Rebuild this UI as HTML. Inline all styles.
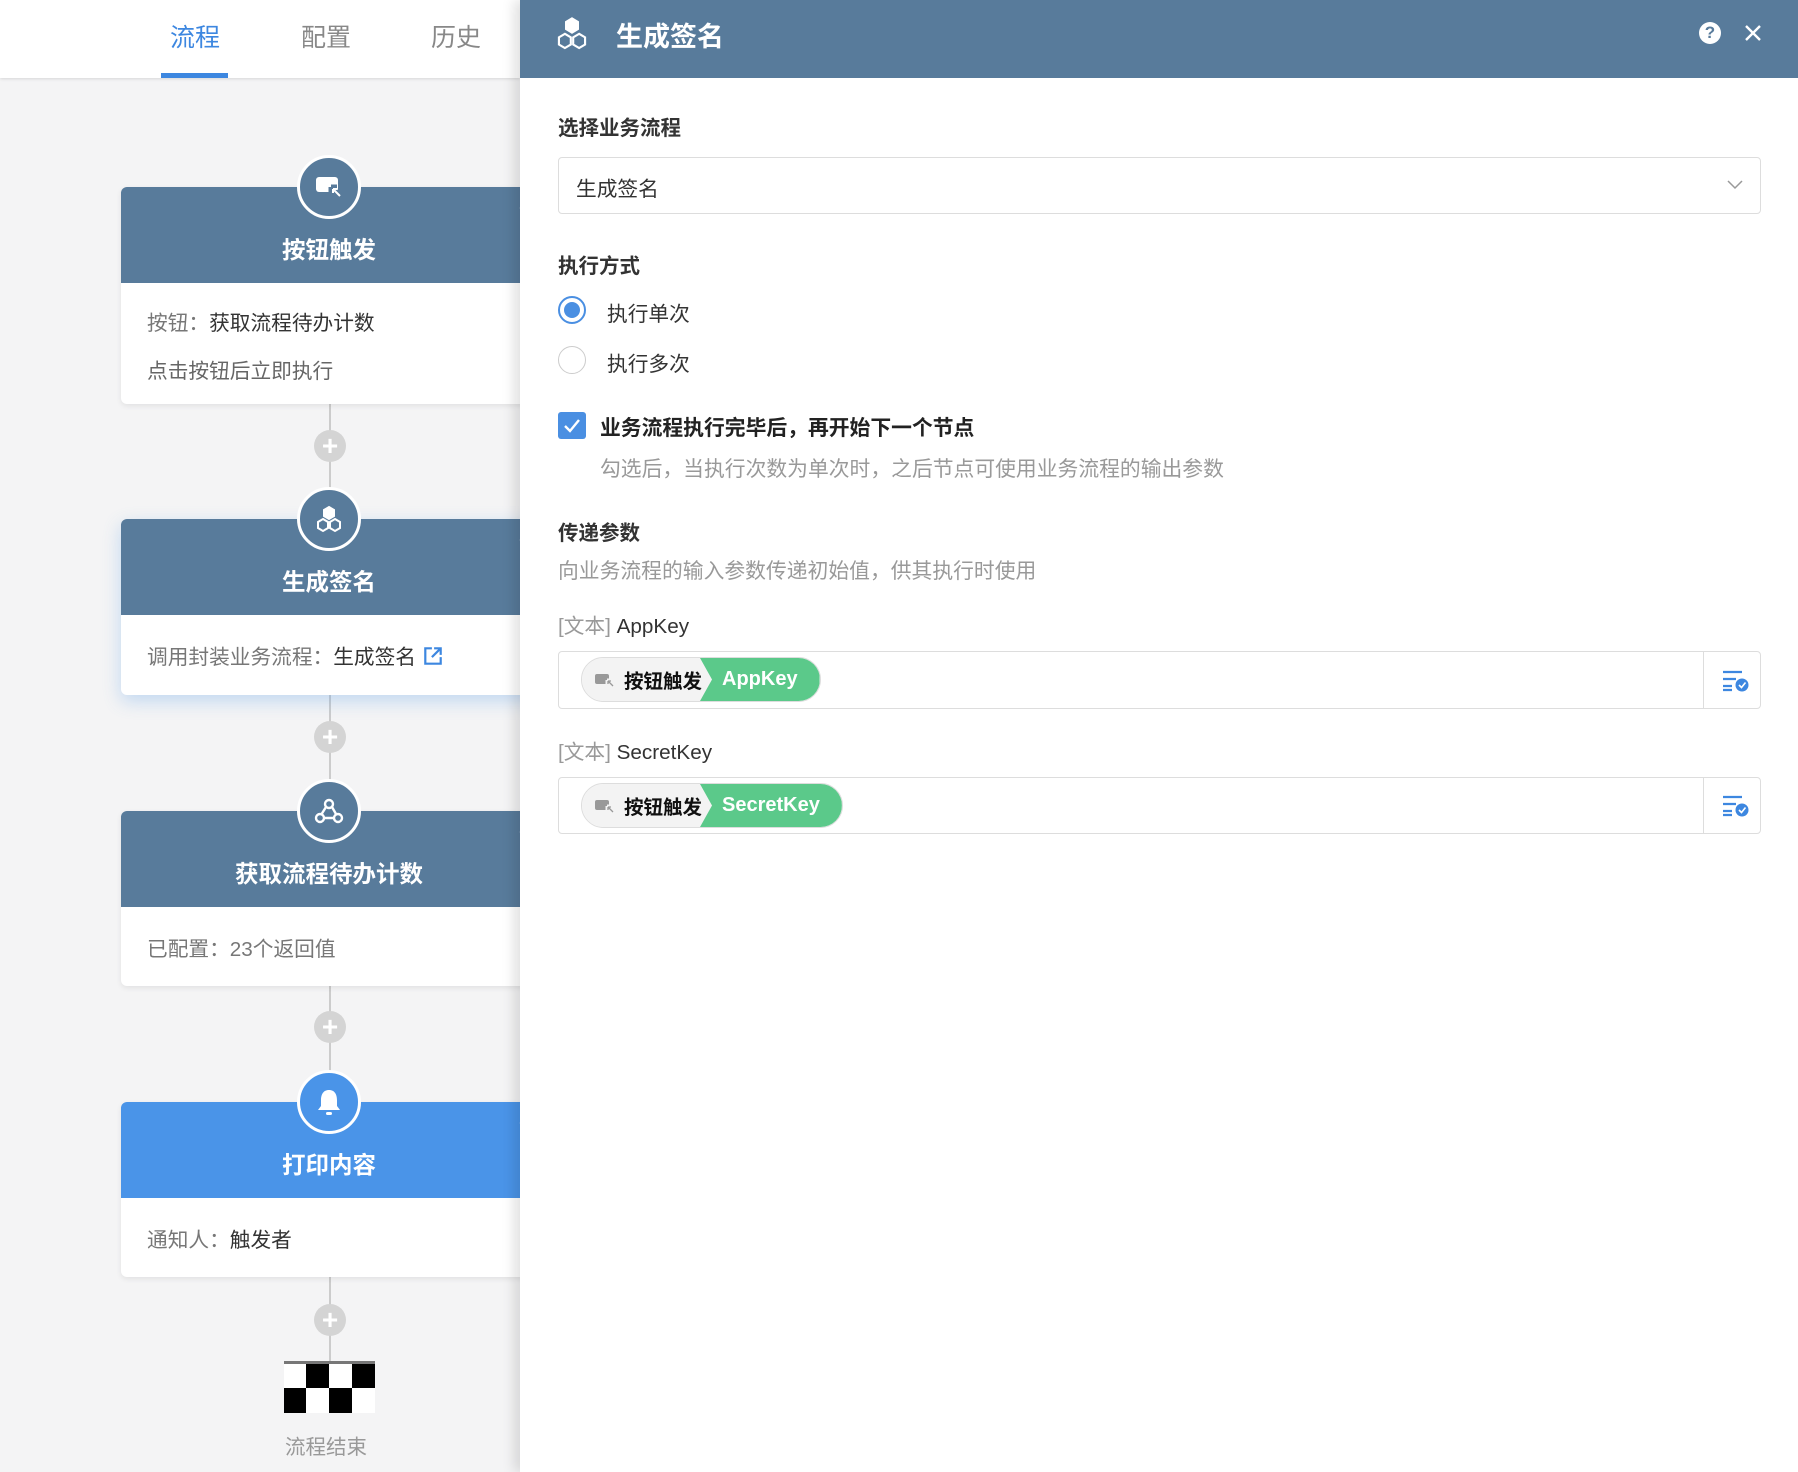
<!DOCTYPE html>
<html><head><meta charset="utf-8"><style>
*{margin:0;padding:0;box-sizing:border-box}
body{width:1798px;height:1472px;position:relative;overflow:hidden;background:#f4f4f5;font-family:"Liberation Sans","Noto Sans CJK SC",sans-serif}
.abs{position:absolute}
.topbar{left:0;top:0;width:520px;height:78px;background:#fff;box-shadow:0 1px 3px rgba(0,0,0,.12)}
.tab{top:18px;font-size:25px;color:#888;width:80px;text-align:center}
.card{left:121px;width:420px;background:#fff;border-radius:6px 0 0 6px;box-shadow:0 2px 6px rgba(0,0,0,.08);overflow:visible}
.ch{position:absolute;left:0;top:0;width:100%;height:96px;background:#587b9b;border-radius:6px 0 0 0;color:#fff;font-size:23.5px;font-weight:bold;text-align:center;padding-top:28px;line-height:70px}
.ch span{position:relative;left:-2px}
.ic{position:absolute;left:176px;top:-32px;width:64px;height:64px;border-radius:50%;background:#587b9b;border:3px solid #fff;display:flex;align-items:center;justify-content:center}
.dots{position:absolute;right:0;top:16px;color:#dfe6ee;font-size:18px;letter-spacing:1px;line-height:10px}
.cb{position:absolute;left:26px;font-size:20.7px;color:#333}
.cb .g{color:#777}
.line{left:329px;width:2px;background:#ccc}
.plus{left:314px;width:32px;height:32px;border-radius:50%;background:#d4d4d4;color:#fff;font-size:28px;line-height:31px;text-align:center;font-weight:bold}
.panel{left:520px;top:0;width:1278px;height:1472px;background:#fff;box-shadow:-6px 0 12px rgba(0,0,0,.12)}
.ph{left:0;top:0;width:1278px;height:78px;background:#587b9b}
.lbl{left:38px;font-size:20.5px;font-weight:bold;color:#333}
.txt{font-size:20.7px;color:#333}
.box{left:38px;width:1203px;border:1px solid #ddd;border-radius:4px;background:#fff}
.pill{position:absolute;left:22px;top:5px;height:45px;display:flex;border-radius:23px;overflow:hidden;border:1px solid #ddd}
.pg{background:#f3f3f3;display:flex;align-items:center;padding-left:12px;padding-right:10px;font-size:19.5px;font-weight:bold;color:#111}
.pgr{background:#5bc98a;color:#fff;font-size:20px;font-weight:bold;display:flex;align-items:center;padding:0 22px 0 22px;margin-left:-12px;clip-path:polygon(0 0,100% 0,100% 100%,0 100%,12px 50%)}
</style></head><body>
<div class="abs topbar"></div>
<div class="abs tab" style="left:155px;color:#3d87e0">流程</div>
<div class="abs tab" style="left:286px">配置</div>
<div class="abs tab" style="left:416px">历史</div>
<div class="abs" style="left:161px;top:73px;width:67px;height:5px;background:#3d87e0"></div>

<div class="abs line" style="top:400px;height:1000px"></div>

<div class="abs card" style="top:187px;height:217px">
 <div class="ch"><span>按钮触发</span></div>
 <div class="ic"><svg width="30" height="26" viewBox="0 0 30 26"><rect x="2" y="3" width="22" height="15" rx="3" fill="#fff"/><path d="M17 13 L27 23 M17 13 L17 19 M17 13 L23 13" stroke="#587b9b" stroke-width="5"/><path d="M19 15 L26 22 M19 15 V19 M19 15 H23" stroke="#fff" stroke-width="2" fill="none"/></svg></div>
 <div class="dots">•••</div>
 <div class="cb" style="top:119px"><span class="g">按钮：</span>获取流程待办计数</div>
 <div class="cb g" style="top:167px;color:#666">点击按钮后立即执行</div>
</div>
<div class="abs plus" style="top:430px">+</div>

<div class="abs card" style="top:519px;height:176px;box-shadow:0 6px 18px rgba(74,148,232,.3)">
 <div class="ch"><span>生成签名</span></div>
 <div class="ic"><svg width="30" height="30" viewBox="0 0 30 30" fill="none" stroke="#fff" stroke-width="2"><path d="M15 3 L20 6 V12 L15 15 L10 12 V6Z" fill="#fff"/><path d="M9 15 L14 18 V24 L9 27 L4 24 V18Z"/><path d="M21 15 L26 18 V24 L21 27 L16 24 V18Z"/></svg></div>
 <div class="dots">•••</div>
 <div class="cb" style="top:121px"><span class="g">调用封装业务流程：</span>生成签名 <svg width="22" height="22" viewBox="0 0 20 20" fill="none" stroke="#3d87e0" stroke-width="2" style="vertical-align:-3px"><path d="M9 3 H3 V17 H17 V11 M11 3 H17 V9 M17 3 L9 11"/></svg></div>
</div>
<div class="abs plus" style="top:721px">+</div>

<div class="abs card" style="top:811px;height:175px">
 <div class="ch"><span>获取流程待办计数</span></div>
 <div class="ic"><svg width="32" height="30" viewBox="0 0 32 30" fill="none" stroke="#fff" stroke-width="2.4"><circle cx="16" cy="8" r="4"/><circle cx="7" cy="22" r="4"/><circle cx="25" cy="22" r="4"/><path d="M13 11 L8 19 M19 11 L23 18 M11 22 H21"/></svg></div>
 <div class="dots">•••</div>
 <div class="cb" style="top:121px"><span class="g">已配置：23个返回值</span></div>
</div>
<div class="abs plus" style="top:1011px">+</div>

<div class="abs card" style="top:1102px;height:175px">
 <div class="ch" style="background:#4a94e8"><span>打印内容</span></div>
 <div class="ic" style="background:#4a94e8"><svg width="28" height="30" viewBox="0 0 28 30"><path d="M14 3 C8 3 6 8 6 13 V19 L3 23 H25 L22 19 V13 C22 8 20 3 14 3Z" fill="#fff"/><rect x="11" y="25" width="6" height="3" rx="1.5" fill="#fff"/></svg></div>
 <div class="dots">•••</div>
 <div class="cb" style="top:121px"><span class="g">通知人：</span>触发者</div>
</div>
<div class="abs plus" style="top:1304px">+</div>

<div class="abs" style="left:284px;top:1361px;width:91px;height:52px;background:#fff;border-top:3px solid #777">
 <div class="abs" style="left:22px;top:0;width:23px;height:24px;background:#000"></div>
 <div class="abs" style="left:68px;top:0;width:23px;height:24px;background:#000"></div>
 <div class="abs" style="left:0;top:24px;width:22px;height:25px;background:#000"></div>
 <div class="abs" style="left:45px;top:24px;width:23px;height:25px;background:#000"></div>
</div>
<div class="abs" style="left:285px;top:1430px;font-size:20.5px;color:#999">流程结束</div>

<div class="abs panel">
 <div class="abs ph"></div>
 <svg class="abs" style="left:34px;top:16px" width="36" height="38" viewBox="0 0 30 32" fill="none" stroke="#fff" stroke-width="1.8"><path d="M15 2 L20 5 V11 L15 14 L10 11 V5Z" fill="#fff"/><path d="M9 15 L14 18 V24 L9 27 L4 24 V18Z"/><path d="M21 15 L26 18 V24 L21 27 L16 24 V18Z"/></svg>
 <div class="abs" style="left:96px;top:15px;font-size:27px;color:#fff;font-weight:bold">生成签名</div>
 <div class="abs" style="left:1179px;top:22px;width:22px;height:22px;border-radius:50%;background:#fff;color:#587b9b;font-size:17px;font-weight:bold;text-align:center;line-height:22px">?</div>
 <svg class="abs" style="left:1224px;top:24px" width="18" height="18" viewBox="0 0 18 18" stroke="#fff" stroke-width="2.4"><path d="M2 2 L16 16 M16 2 L2 16"/></svg>

 <div class="abs lbl" style="top:111px">选择业务流程</div>
 <div class="abs box" style="top:157px;height:57px"><div class="abs txt" style="left:17px;top:14px">生成签名</div>
  <svg class="abs" style="left:1168px;top:22px" width="16" height="10" viewBox="0 0 16 10" fill="none" stroke="#999" stroke-width="1.5"><path d="M1 1 L8 8 L15 1"/></svg></div>

 <div class="abs lbl" style="top:249px">执行方式</div>
 <div class="abs" style="left:38px;top:296px;width:28px;height:28px;border-radius:50%;border:2px solid #4a8fe2;padding:4px"><div style="width:16px;height:16px;border-radius:50%;background:#4a8fe2"></div></div>
 <div class="abs txt" style="left:87px;top:297px">执行单次</div>
 <div class="abs" style="left:38px;top:346px;width:28px;height:28px;border-radius:50%;border:1px solid #ccc"></div>
 <div class="abs txt" style="left:87px;top:347px">执行多次</div>

 <div class="abs" style="left:38px;top:412px;width:28px;height:27px;border-radius:3px;background:#4a8fe2"><svg width="28" height="27" viewBox="0 0 28 27" fill="none" stroke="#fff" stroke-width="2.4"><path d="M7 14 L12 19 L21 8"/></svg></div>
 <div class="abs" style="left:80px;top:411px;font-size:20.8px;font-weight:bold;color:#222">业务流程执行完毕后，再开始下一个节点</div>
 <div class="abs" style="left:80px;top:452px;font-size:20.8px;color:#999">勾选后，当执行次数为单次时，之后节点可使用业务流程的输出参数</div>

 <div class="abs lbl" style="top:516px">传递参数</div>
 <div class="abs" style="left:38px;top:554px;font-size:20.8px;color:#999">向业务流程的输入参数传递初始值，供其执行时使用</div>

 <div class="abs txt" style="left:38px;top:609px"><span style="color:#999">[文本]</span> AppKey</div>
 <div class="abs box" style="top:651px;height:58px">
  <div class="pill"><div class="pg"><svg width="22" height="18" viewBox="0 0 22 18" style="margin-right:8px"><rect x="1" y="3" width="14" height="10" rx="2" fill="#999"/><path d="M13 9 L20 16 M13 9 V13 M13 9 H17" stroke="#f3f3f3" stroke-width="3"/><path d="M14 10 L19 15 M14 10 V13 M14 10 H17" stroke="#999" stroke-width="1.3" fill="none"/></svg>按钮触发</div><div class="pgr">AppKey</div></div>
  <div class="abs" style="left:1144px;top:0;width:1px;height:56px;background:#ddd"></div>
  <svg class="abs" style="left:1163px;top:18px" width="28" height="22" viewBox="0 0 28 22"><path d="M1 2 H20 M1 9 H14 M1 16 H10 M1 20 H10" stroke="#3d87e0" stroke-width="2.2"/><circle cx="20" cy="15" r="6.5" fill="#3d87e0"/><path d="M17 15 L19.5 17.5 L23.5 12.5" stroke="#fff" stroke-width="1.6" fill="none"/></svg>
 </div>

 <div class="abs txt" style="left:38px;top:735px"><span style="color:#999">[文本]</span> SecretKey</div>
 <div class="abs box" style="top:777px;height:57px">
  <div class="pill"><div class="pg"><svg width="22" height="18" viewBox="0 0 22 18" style="margin-right:8px"><rect x="1" y="3" width="14" height="10" rx="2" fill="#999"/><path d="M13 9 L20 16 M13 9 V13 M13 9 H17" stroke="#f3f3f3" stroke-width="3"/><path d="M14 10 L19 15 M14 10 V13 M14 10 H17" stroke="#999" stroke-width="1.3" fill="none"/></svg>按钮触发</div><div class="pgr">SecretKey</div></div>
  <div class="abs" style="left:1144px;top:0;width:1px;height:55px;background:#ddd"></div>
  <svg class="abs" style="left:1163px;top:17px" width="28" height="22" viewBox="0 0 28 22"><path d="M1 2 H20 M1 9 H14 M1 16 H10 M1 20 H10" stroke="#3d87e0" stroke-width="2.2"/><circle cx="20" cy="15" r="6.5" fill="#3d87e0"/><path d="M17 15 L19.5 17.5 L23.5 12.5" stroke="#fff" stroke-width="1.6" fill="none"/></svg>
 </div>
</div>
</body></html>
